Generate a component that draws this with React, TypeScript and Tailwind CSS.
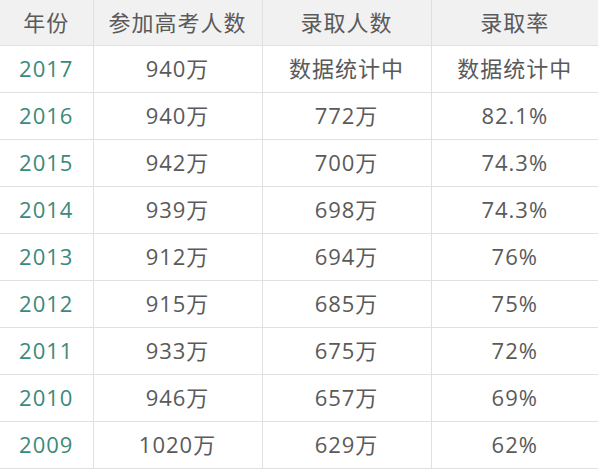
const rows = [
  ["2017", "940万", "数据统计中", "数据统计中"],
  ["2016", "940万", "772万", "82.1%"],
  ["2015", "942万", "700万", "74.3%"],
  ["2014", "939万", "698万", "74.3%"],
  ["2013", "912万", "694万", "76%"],
  ["2012", "915万", "685万", "75%"],
  ["2011", "933万", "675万", "72%"],
  ["2010", "946万", "657万", "69%"],
  ["2009", "1020万", "629万", "62%"],
];

export default function App() {
  return (
    <div className="w-[598px] h-[469px] overflow-hidden bg-white font-['Open_Sans','Noto_Sans_CJK_SC',sans-serif] text-[22px] tracking-[1px] text-[#5a5a5a]">
      <table className="w-[598px] border-collapse table-fixed">
        <colgroup>
          <col className="w-[93px]" />
          <col className="w-[169px]" />
          <col className="w-[169px]" />
          <col className="w-[167px]" />
        </colgroup>
        <thead>
          <tr className="h-[45px] bg-[#f1f1f1]">
            {["年份", "参加高考人数", "录取人数", "录取率"].map((h) => (
              <th key={h} className="border border-t-0 border-[#e0e0e0] font-normal text-center first:border-l-0 last:border-r-0">
                {h}
              </th>
            ))}
          </tr>
        </thead>
        <tbody>
          {rows.map((r) => (
            <tr key={r[0]} className="h-[47px]">
              <td className="border border-l-0 border-[#e0e0e0] text-center text-[#3a8a7c]">{r[0]}</td>
              <td className="border border-[#e0e0e0] text-center">{r[1]}</td>
              <td className="border border-[#e0e0e0] text-center">{r[2]}</td>
              <td className="border border-r-0 border-[#e0e0e0] text-center">{r[3]}</td>
            </tr>
          ))}
        </tbody>
      </table>
    </div>
  );
}
